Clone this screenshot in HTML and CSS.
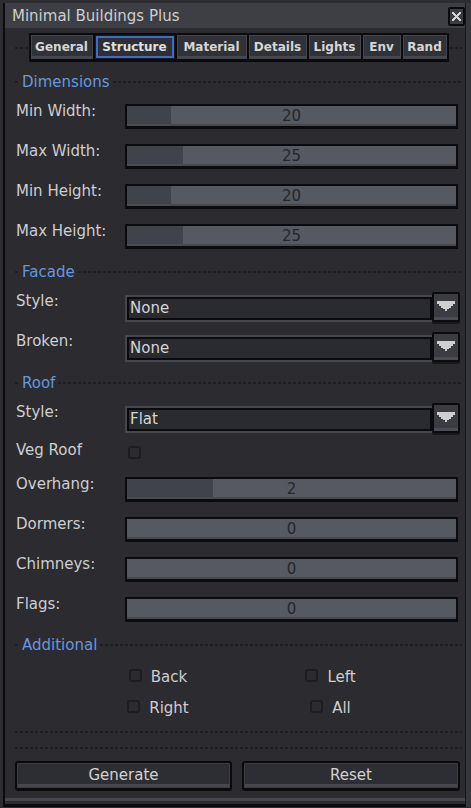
FILE: index.html
```html
<!DOCTYPE html>
<html>
<head>
<meta charset="utf-8">
<link rel="stylesheet" href="styles.css">
</head>
<body>
<div class="window">
  <div class="titlebar">
    <span class="title">Minimal Buildings Plus</span>
    <span class="close">
      <svg width="9" height="9" viewBox="0 0 9 9" shape-rendering="crispEdges"><path d="M0 0h2v1h1v1h1v1h1V2h1V1h1V0h2v2H8v1H7v1H6v1h1v1h1v1h1v2H7V8H6V7H5V6H4v1H3v1H2v1H0V7h1V6h1V5h1V4H2V3H1V2H0z" fill="#d2d2d2"/></svg>
    </span>
  </div>
  <div class="content">
    <div class="tabbar">
      <div class="tab">General</div>
      <div class="tab active">Structure</div>
      <div class="tab">Material</div>
      <div class="tab">Details</div>
      <div class="tab">Lights</div>
      <div class="tab">Env</div>
      <div class="tab">Rand</div>
    </div>

    <div class="section-head"><span>Dimensions</span></div>
    <div class="row"><span class="label">Min Width:</span><div class="slider"><div class="fill" style="width:13.4%"></div><span class="val">20</span></div></div>
    <div class="row"><span class="label">Max Width:</span><div class="slider"><div class="fill" style="width:16.9%"></div><span class="val">25</span></div></div>
    <div class="row"><span class="label">Min Height:</span><div class="slider"><div class="fill" style="width:13.4%"></div><span class="val">20</span></div></div>
    <div class="row"><span class="label">Max Height:</span><div class="slider"><div class="fill" style="width:16.9%"></div><span class="val">25</span></div></div>

    <div class="section-head"><span>Facade</span></div>
    <div class="row select"><span class="label">Style:</span><div class="dropdown">None</div><div class="arrow"><svg width="18" height="10" viewBox="0 0 18 10" shape-rendering="crispEdges"><path d="M0 0h18v3h-2v2h-2v2h-2v1h-2v2H8V8H6V7H4V5H2V3H0z" fill="#cfcfcf"/></svg></div></div>
    <div class="row select"><span class="label">Broken:</span><div class="dropdown">None</div><div class="arrow"><svg width="18" height="10" viewBox="0 0 18 10" shape-rendering="crispEdges"><path d="M0 0h18v3h-2v2h-2v2h-2v1h-2v2H8V8H6V7H4V5H2V3H0z" fill="#cfcfcf"/></svg></div></div>

    <div class="section-head"><span>Roof</span></div>
    <div class="row select"><span class="label">Style:</span><div class="dropdown">Flat</div><div class="arrow"><svg width="18" height="10" viewBox="0 0 18 10" shape-rendering="crispEdges"><path d="M0 0h18v3h-2v2h-2v2h-2v1h-2v2H8V8H6V7H4V5H2V3H0z" fill="#cfcfcf"/></svg></div></div>
    <div class="row check"><span class="label">Veg Roof</span><span class="cb"></span></div>
    <div class="row"><span class="label">Overhang:</span><div class="slider"><div class="fill" style="width:26%"></div><span class="val">2</span></div></div>
    <div class="row"><span class="label">Dormers:</span><div class="slider"><span class="val">0</span></div></div>
    <div class="row"><span class="label">Chimneys:</span><div class="slider"><span class="val">0</span></div></div>
    <div class="row"><span class="label">Flags:</span><div class="slider"><span class="val">0</span></div></div>

    <div class="section-head"><span>Additional</span></div>
    <div class="checks">
      <label class="opt"><span class="cb"></span><span>Back</span></label>
      <label class="opt"><span class="cb"></span><span>Left</span></label>
      <label class="opt"><span class="cb"></span><span>Right</span></label>
      <label class="opt"><span class="cb"></span><span>All</span></label>
    </div>

    <div class="sep"></div>
    <div class="sep"></div>

    <div class="buttons">
      <div class="btn">Generate</div>
      <div class="btn">Reset</div>
    </div>
  </div>
</div>
</body>
</html>
```

FILE: styles.css
```css
html, body {
  margin: 0;
  padding: 0;
  background: #2c2c31;
}
body {
  font-family: "DejaVu Sans", "Liberation Sans", sans-serif;
  font-size: 15px;
  color: #cecece;
  width: 471px;
  height: 808px;
  overflow: hidden;
}
.window {
  margin: 3px 0 0 3px;
  width: 460px;
  border-left: 2px solid #0b0b0d;
  border-right: 1px solid #17171a;
  border-bottom: 3px solid #0b0b0d;
  padding-bottom: 3px;
  background: #2b2b30;
  box-shadow: 5px 0 0 #36373c;
}
.titlebar {
  height: 25px;
  background: #3d3f45;
  display: flex;
  align-items: center;
  justify-content: space-between;
  padding-left: 7px;
}
.title {
  line-height: 23px;
  padding-top: 2px;
  color: #cecece;
}
.close {
  width: 13px;
  height: 15px;
  margin-top: 2px;
  border: 2px solid #0b0b0d;
  border-radius: 2px;
  background: #3a3c42;
  display: flex;
  align-items: center;
  justify-content: center;
}
.content {
  padding: 0 3px 7px 10px;
  border-bottom: 3px solid #45474d;
}
.tabbar {
  margin-top: 5px;
  display: grid;
  grid-template-columns: 66px 82px 72px 60px 54px 40px 46px;
  justify-content: center;
  background: repeating-linear-gradient(90deg, #1e1e22 0 3px, transparent 3px 5px) left center / 100% 2px no-repeat;
}
.tab {
  box-sizing: border-box;
  height: 29px;
  border: 2px solid #0b0b0d;
  border-left-width: 0;
  border-bottom-width: 3px;
  background: #313237;
  box-shadow: inset 0 0 0 1px #44464c, inset 0 -3px 0 #46484e;
  font-weight: bold;
  font-size: 12px;
  line-height: 24px;
  text-align: center;
  color: #d6d6d6;
}
.tab:first-child {
  border-left-width: 2px;
}
.tab.active {
  background: #2e2f34;
  box-shadow: inset 0 0 0 1px #1a1a1e, inset 0 0 0 3px #3e6cc7;
  color: #e0e0e0;
}
.section-head {
  display: flex;
  align-items: center;
  height: 18px;
  margin-top: 14px;
  color: #6797dd;
  line-height: 18px;
}
.tabbar + .section-head {
  margin-top: 11px;
}
.section-head::before,
.section-head::after {
  content: "";
  height: 2px;
  background: repeating-linear-gradient(90deg, #1e1e22 0 3px, transparent 3px 5px);
}
.section-head::before {
  width: 5px;
  margin-right: 2px;
}
.section-head::after {
  flex: 1;
  margin-left: 3px;
}
.row {
  display: flex;
  align-items: flex-start;
  margin-top: 15px;
}
.section-head + .row {
  margin-top: 13px;
}
.label {
  flex: none;
  width: 109px;
  padding-left: 1px;
  line-height: 18px;
  margin-top: -2px;
  white-space: nowrap;
}
.slider {
  position: relative;
  box-sizing: border-box;
  width: 333px;
  height: 25px;
  border: 2px solid #0b0b0d;
  border-bottom-width: 3px;
  background: #565960;
  box-shadow: inset 0 -2px 0 #47494f;
  text-align: center;
  line-height: 20px;
  color: #25262a;
}
.fill {
  position: absolute;
  left: 0;
  top: 0;
  bottom: 0;
  background: #40434a;
  box-shadow: inset 0 -2px 0 #4a4c52;
}
.val {
  position: relative;
}
.row.select {
  margin-top: 10px;
}
.section-head + .row.select {
  margin-top: 11px;
}
.row.select + .section-head {
  margin-top: 12px;
}
.row.select .label {
  margin-top: 0;
}
.dropdown {
  box-sizing: border-box;
  width: 307px;
  height: 27px;
  margin-top: 3px;
  border: 2px solid #45474d;
  border-right: 0;
  background: #2a2b30;
  box-shadow: inset 0 0 0 2px #0b0b0d;
  padding-left: 3px;
  line-height: 23px;
  color: #d4d4d4;
}
.arrow {
  box-sizing: border-box;
  width: 28px;
  height: 30px;
  border: 2px solid #0b0b0d;
  border-radius: 2px;
  background: #3a3c42;
  box-shadow: inset 0 -3px 0 #4b4d53, 0 2px 0 #18181b;
  display: flex;
  align-items: center;
  justify-content: center;
  padding-bottom: 2px;
}
.row.check {
  margin-top: 8px;
}
.row.check .label {
  margin-top: 0;
}
.row.check + .row {
  margin-top: 18px;
}
.cb {
  flex: none;
  box-sizing: border-box;
  width: 13px;
  height: 13px;
  border: 2px solid #1d1d21;
  border-radius: 3px;
}
.row.check .cb {
  margin: 5px 0 0 3px;
}
.checks {
  display: grid;
  grid-template-columns: 172px 173px;
  row-gap: 13px;
  margin: 14px 0 0 57px;
  justify-items: center;
}
.opt {
  display: flex;
  align-items: flex-start;
  gap: 9px;
  line-height: 18px;
}
.opt .cb {
  margin-top: 1px;
}
.sep {
  height: 2px;
  margin-top: 14px;
  background: repeating-linear-gradient(90deg, #1e1e22 0 3px, transparent 3px 5px);
}
.buttons {
  display: grid;
  grid-template-columns: 217px 218px;
  column-gap: 10px;
  margin-top: 12px;
}
.btn {
  box-sizing: border-box;
  height: 30px;
  border: 2px solid #0b0b0d;
  border-bottom-width: 3px;
  border-radius: 3px;
  background: #2d2e33;
  box-shadow: inset 0 0 0 1px #3b3d43, inset 0 -4px 0 #46484e;
  line-height: 25px;
  text-align: center;
  color: #d2d2d2;
}
```
